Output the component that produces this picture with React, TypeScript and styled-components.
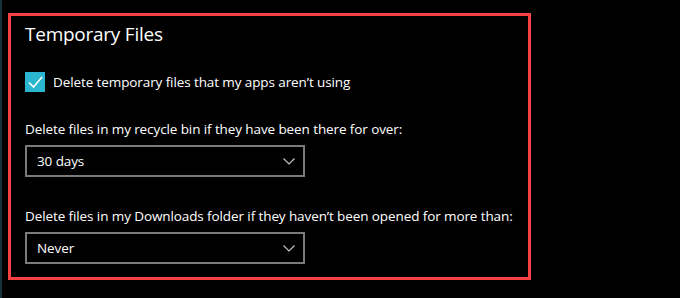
import React from 'react'
import styled, { createGlobalStyle } from 'styled-components'

const GlobalStyle = createGlobalStyle`
  html, body {
    margin: 0;
    padding: 0;
    background: #000;
  }
  body {
    font-family: "Open Sans", "Noto Sans", sans-serif;
    color: #fff;
  }
`

const Page = styled.div`
  display: flex;
  width: 680px;
  height: 298px;
  background: #000;
  overflow: hidden;
`

const Rail = styled.div`
  width: 2px;
  background: #15343a;
  flex-shrink: 0;
`

const Stage = styled.div`
  padding: 13px 0 0 6px;
`

const Highlight = styled.section`
  box-sizing: border-box;
  width: 523px;
  height: 267px;
  border: 3px solid #fd4042;
  padding: 4px 0 0 14px;
`

const Title = styled.h2`
  margin: 0;
  font-size: 19px;
  font-weight: 400;
  line-height: 28px;
  letter-spacing: -0.25px;
`

const CheckRow = styled.label`
  display: flex;
  align-items: center;
  gap: 8px;
  margin-top: 24px;
  font-size: 13.5px;
  line-height: 20px;
  letter-spacing: -0.1px;
`

const Box = styled.span`
  width: 20px;
  height: 20px;
  background: #2ab5d1;
  display: flex;
  align-items: center;
  justify-content: center;
`

const Label = styled.div<{ $gap: number }>`
  margin-top: ${p => p.$gap}px;
  font-size: 13.5px;
  line-height: 20px;
  letter-spacing: -0.1px;
`

const Select = styled.div`
  box-sizing: border-box;
  width: 280px;
  height: 32px;
  margin-top: 6px;
  border: 2px solid #7a7a7a;
  display: flex;
  align-items: center;
  justify-content: space-between;
  padding: 0 8px 0 10px;
  font-size: 13.5px;
  letter-spacing: -0.1px;
`

const Chevron = () => (
  <svg width="12" height="7" viewBox="0 0 12 7">
    <path d="M0.5 0.5 L6 6 L11.5 0.5" fill="none" stroke="#c8c8c8" strokeWidth="1.1" />
  </svg>
)

const Check = () => (
  <svg width="20" height="20" viewBox="0 0 20 20">
    <path d="M4 10.5 L8.5 15 L17 5" fill="none" stroke="#fff" strokeWidth="1.6" />
  </svg>
)

export default function App() {
  return (
    <>
      <GlobalStyle />
      <Page>
        <Rail />
        <Stage>
          <Highlight>
            <Title>Temporary Files</Title>
            <CheckRow>
              <Box><Check /></Box>
              Delete temporary files that my apps aren’t using
            </CheckRow>
            <Label $gap={27}>Delete files in my recycle bin if they have been there for over:</Label>
            <Select>
              <span>30 days</span>
              <Chevron />
            </Select>
            <Label $gap={29}>Delete files in my Downloads folder if they haven’t been opened for more than:</Label>
            <Select>
              <span>Never</span>
              <Chevron />
            </Select>
          </Highlight>
        </Stage>
      </Page>
    </>
  )
}
